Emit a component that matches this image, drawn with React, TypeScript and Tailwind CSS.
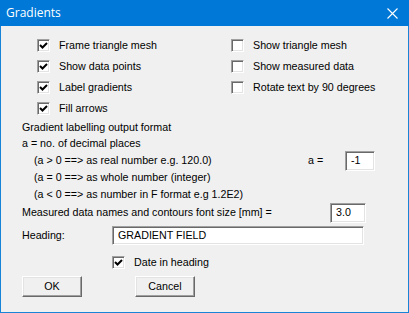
import React from 'react';

const font = "font-['Liberation_Sans',Arial,sans-serif] text-[10.7px] text-black";

const Check: React.FC<{ checked?: boolean }> = ({ checked }) => (
  <span className="w-[13px] h-[13px] shrink-0 bg-white border border-t-[#a0a0a0] border-l-[#a0a0a0] border-b-white border-r-white shadow-[inset_1px_1px_0_#696969,inset_-1px_-1px_0_#e3e3e3] flex items-center justify-center">
    {checked && (
      <svg width="9" height="9" viewBox="0 0 9 9">
        <path d="M1 4 L3.5 6.5 L8 2" fill="none" stroke="#000" strokeWidth="2" />
      </svg>
    )}
  </span>
);

const CheckRow: React.FC<{ label: string; checked?: boolean }> = ({ label, checked }) => (
  <div className="h-[21px] flex items-center gap-[9px]">
    <Check checked={checked} />
    <span>{label}</span>
  </div>
);

const Field: React.FC<{ value: string; className: string }> = ({ value, className }) => (
  <div className={`bg-white border border-t-[#a0a0a0] border-l-[#a0a0a0] border-b-white border-r-white shadow-[inset_1px_1px_0_#696969,inset_-1px_-1px_0_#e3e3e3] flex items-center pl-[5px] ${className}`}>
    {value}
  </div>
);

const Button: React.FC<{ label: string }> = ({ label }) => (
  <div className="w-[60px] h-[21px] bg-[#f0f0f0] border border-t-white border-l-white border-b-[#696969] border-r-[#696969] shadow-[inset_-1px_-1px_0_#a0a0a0,inset_1px_1px_0_#e3e3e3] flex items-center justify-center">
    {label}
  </div>
);

export default function App() {
  return (
    <div className={`w-[409px] h-[313px] flex flex-col bg-[#f0f0f0] border border-t-0 border-[#1883d7] ${font}`}>
      <div className="h-[26px] -mx-px bg-[#0078d7] flex items-center justify-between pl-[6px] pr-[11px] text-white font-['Open_Sans',sans-serif] text-[12px]">
        <span>Gradients</span>
        <svg width="11" height="11" viewBox="0 0 11 11">
          <path d="M0.5 0.5 L10.5 10.5 M10.5 0.5 L0.5 10.5" stroke="#fff" strokeWidth="1.1" />
        </svg>
      </div>

      <div className="flex pt-[9px]">
        <div className="w-[230px] pl-[36px] flex flex-col">
          <CheckRow label="Frame triangle mesh" checked />
          <CheckRow label="Show data points" checked />
          <CheckRow label="Label gradients" checked />
          <CheckRow label="Fill arrows" checked />
        </div>
        <div className="flex flex-col">
          <CheckRow label="Show triangle mesh" />
          <CheckRow label="Show measured data" />
          <CheckRow label="Rotate text by 90 degrees" />
        </div>
      </div>

      <div className="pl-[21px] flex flex-col">
        <div className="h-[16px] flex items-center">Gradient labelling output format</div>
        <div className="h-[17px] flex items-center">a = no. of decimal places</div>
        <div className="h-[17px] flex items-center pl-[12px]">
          <span className="w-[274px]">(a &gt; 0 ==&gt; as real number e.g. 120.0)</span>
          <span className="w-[37px]">a =</span>
          <Field value="-1" className="w-[30px] h-[20px]" />
        </div>
        <div className="h-[17px] flex items-center pl-[12px]">(a = 0 ==&gt; as whole number (integer)</div>
        <div className="h-[17px] flex items-center pl-[12px]">(a &lt; 0 ==&gt; as number in F format e.g 1.2E2)</div>
        <div className="h-[19px] flex items-center">
          <span className="w-[308px]">Measured data names and contours font size [mm] =</span>
          <Field value="3.0" className="w-[36px] h-[20px]" />
        </div>
        <div className="h-[19px] flex items-center mt-[4px]">
          <span className="w-[90px]">Heading:</span>
          <Field value="GRADIENT FIELD" className="w-[252px] h-[19px] pl-[3px]" />
        </div>
        <div className="h-[14px] flex items-center gap-[9px] mt-[10px] pl-[90px]">
          <Check checked />
          <span>Date in heading</span>
        </div>
        <div className="flex items-center mt-[7px] gap-[53px]">
          <Button label="OK" />
          <Button label="Cancel" />
        </div>
      </div>
    </div>
  );
}
